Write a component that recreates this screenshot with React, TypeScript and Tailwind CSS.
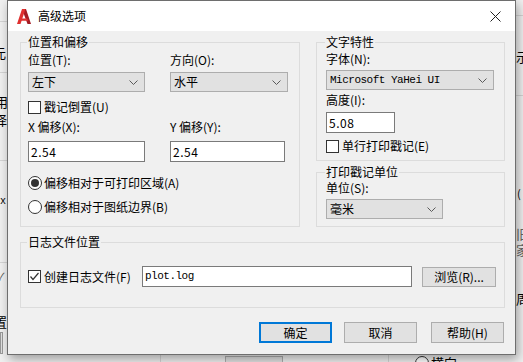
import React from "react";

const cjk = "font-['Noto_Sans_CJK_SC','Microsoft_YaHei',sans-serif]";

function Chevron() {
  return (
    <svg width="9" height="5" viewBox="0 0 9 5" className="shrink-0">
      <polyline points="0.5,0.5 4.5,4.5 8.5,0.5" fill="none" stroke="#5a5a5a" strokeWidth="1" />
    </svg>
  );
}

function Dropdown({ value, width, mono }: { value: string; width: string; mono?: boolean }) {
  return (
    <div
      className={`${width} h-[20px] flex items-center justify-between border border-[#adadad] bg-[#e1e1e1] pl-[3px] pr-[6px]`}
    >
      <span className={mono ? "font-['Liberation_Mono',monospace] text-[11px] tracking-[-0.5px]" : "text-[12px]"}>
        {value}
      </span>
      <Chevron />
    </div>
  );
}

function TextBox({ value, width, mono }: { value: string; width: string; mono?: boolean }) {
  return (
    <div className={`${width} h-[21px] flex items-center border border-[#7a7a7a] bg-white px-[2px]`}>
      <span className={mono ? "font-['Liberation_Mono',monospace] text-[11px] tracking-[-0.5px]" : "text-[12px] tracking-[0.5px]"}>
        {value}
      </span>
    </div>
  );
}

function CheckBox({ label, checked }: { label: string; checked?: boolean }) {
  return (
    <div className="flex items-center h-[16px]">
      <span className="w-[13px] h-[13px] border border-[#333] bg-white flex items-center justify-center">
        {checked && (
          <svg width="11" height="11" viewBox="0 0 11 11">
            <polyline points="1.5,5.5 4,8.5 9.5,2" fill="none" stroke="#333" strokeWidth="1.2" />
          </svg>
        )}
      </span>
      <span className="ml-[3px] text-[12px]">{label}</span>
    </div>
  );
}

function Radio({ label, selected }: { label: string; selected?: boolean }) {
  return (
    <div className="flex items-center h-[16px]">
      <span className="w-[14px] h-[14px] rounded-full border border-[#333] bg-white flex items-center justify-center">
        {selected && <span className="w-[8px] h-[8px] rounded-full bg-[#333]" />}
      </span>
      <span className="ml-[2px] text-[12px]">{label}</span>
    </div>
  );
}

function Group({
  title,
  className,
  children,
}: {
  title: string;
  className: string;
  children: React.ReactNode;
}) {
  return (
    <fieldset className={`border border-[#dcdcdc] ${className}`}>
      <legend className="text-[12px] leading-[16px] px-[1px] -ml-[1px]">{title}</legend>
      {children}
    </fieldset>
  );
}

function Button({ label, primary }: { label: string; primary?: boolean }) {
  return (
    <div
      className={`w-[73px] h-[21px] flex items-center justify-center bg-[#e1e1e1] text-[12px] ${
        primary ? "border-2 border-[#0078d7]" : "border border-[#adadad]"
      }`}
    >
      {label}
    </div>
  );
}

function AcadLogo() {
  return (
    <svg width="14" height="15" viewBox="0 0 14 15">
      <polygon points="5,0 9,0 14,15 10.5,15" fill="#a51c24" />
      <polygon points="5,0 8.5,0 3.5,15 0,15" fill="#e0302f" />
      <polygon points="3.6,9.5 10.3,9.5 11,11.8 2.9,11.8" fill="#e0302f" />
    </svg>
  );
}

export default function App() {
  return (
    <div className={`relative w-[523px] h-[362px] overflow-hidden bg-[#f0f0f0] text-[#000] ${cjk}`}>
      {/* background app peeking around the dialog */}
      <div className="absolute left-0 top-[21px] w-[7px] h-px bg-[#d4d4d4]" />
      <div className="absolute left-[-7px] top-[45px] text-[13px] leading-[15px]">元</div>
      <div className="absolute left-0 top-[72px] w-[7px] h-px bg-[#d4d4d4]" />
      <div className="absolute left-[-5px] top-[94px] text-[13px] leading-[15px]">用</div>
      <div className="absolute left-[-6px] top-[112px] text-[13px] leading-[15px]">择</div>
      <div className="absolute left-0 top-[160px] w-[7px] h-px bg-[#d4d4d4]" />
      <div className="absolute left-0 top-[196px] text-[10px] leading-[12px] font-['Liberation_Mono',monospace]">x</div>
      <div className="absolute left-0 top-[262px] w-[7px] h-px bg-[#d4d4d4]" />
      <div className="absolute left-[-3px] top-[270px] text-[11px] leading-[13px] text-[#555]">✓</div>
      <div className="absolute left-[-6px] top-[314px] text-[13px] leading-[15px]">置</div>
      <div className="absolute left-0 top-[332px] w-[3px] h-[22px] border border-[#999] bg-[#e1e1e1]" />
      <div className="absolute left-[516px] top-[15px] w-[7px] h-px bg-[#d4d4d4]" />
      <div className="absolute left-[516px] top-[49px] text-[13px] leading-[15px]">示</div>
      <div className="absolute left-[516px] top-[95px] w-[7px] h-px bg-[#d4d4d4]" />
      <div className="absolute left-[517px] top-[187px] text-[11px] leading-[13px]">(</div>
      <div className="absolute left-[516px] top-[226px] text-[13px] leading-[15px] text-[#666]">旧</div>
      <div className="absolute left-[516px] top-[242px] text-[13px] leading-[15px] text-[#666]">家</div>
      <div className="absolute left-[516px] top-[291px] text-[13px] leading-[15px]">周</div>
      <div className="absolute left-[225px] top-[356px] w-[58px] h-[8px] border border-[#adadad] bg-[#e1e1e1]" />
      <div className="absolute left-[160px] top-[354px] w-px h-[8px] bg-[#d4d4d4]" />
      <div className="absolute left-[388px] top-[354px] w-px h-[8px] bg-[#d4d4d4]" />
      <div className="absolute left-[415px] top-[356px] w-[14px] h-[14px] rounded-full border border-[#333] bg-white" />
      <div className="absolute left-[431px] top-[355px] text-[13px] leading-[15px]">横向</div>

      {/* dialog window */}
      <div className="absolute left-[7px] top-0 w-[509px] h-[355px] border border-[#6e6e6e] bg-[#f0f0f0] shadow-[2px_4px_10px_rgba(0,0,0,0.35)] flex flex-col">
        {/* title bar */}
        <div className="h-[30px] bg-white flex items-center pl-[9px] pr-[10px]">
          <AcadLogo />
          <span className="ml-[7px] text-[12px]">高级选项</span>
          <svg width="11" height="11" viewBox="0 0 11 11" className="ml-auto mr-[4px]">
            <line x1="0.5" y1="0.5" x2="10.5" y2="10.5" stroke="#222" strokeWidth="1" />
            <line x1="10.5" y1="0.5" x2="0.5" y2="10.5" stroke="#222" strokeWidth="1" />
          </svg>
        </div>

        {/* body */}
        <div className="flex-1 flex flex-col pl-[12px] pr-[10px] pt-[3px]">
          <div className="flex gap-[16px]">
            {/* 位置和偏移 */}
            <Group title="位置和偏移" className="w-[280px] h-[193px] pl-[7px]">
              <div className="flex gap-[25px]">
                <div className="flex flex-col w-[117px]">
                  <span className="mt-[2px] text-[12px] leading-[16px]">位置(T):</span>
                  <div className="mt-[4px]">
                    <Dropdown value="左下" width="w-[117px]" />
                  </div>
                </div>
                <div className="flex flex-col w-[117px]">
                  <span className="mt-[2px] text-[12px] leading-[16px]">方向(O):</span>
                  <div className="mt-[4px]">
                    <Dropdown value="水平" width="w-[118px]" />
                  </div>
                </div>
              </div>
              <div className="mt-[7px]">
                <CheckBox label="戳记倒置(U)" />
              </div>
              <div className="flex gap-[25px]">
                <div className="flex flex-col w-[117px]">
                  <span className="mt-[4px] text-[12px] leading-[16px]">X 偏移(X):</span>
                  <div className="mt-[6px]">
                    <TextBox value="2.54" width="w-[117px]" />
                  </div>
                </div>
                <div className="flex flex-col w-[117px]">
                  <span className="mt-[4px] text-[12px] leading-[16px]">Y 偏移(Y):</span>
                  <div className="mt-[6px]">
                    <TextBox value="2.54" width="w-[115px]" />
                  </div>
                </div>
              </div>
              <div className="mt-[13px]">
                <Radio label="偏移相对于可打印区域(A)" selected />
              </div>
              <div className="mt-[8px]">
                <Radio label="偏移相对于图纸边界(B)" />
              </div>
            </Group>

            {/* right column */}
            <div className="w-[189px] flex flex-col">
              <Group title="文字特性" className="h-[127px] pl-[9px]">
                <div className="flex flex-col">
                  <span className="mt-[1px] text-[12px] leading-[16px]">字体(N):</span>
                  <div className="mt-[3px]">
                    <Dropdown value="Microsoft YaHei UI" width="w-[168px]" mono />
                  </div>
                  <span className="mt-[2px] text-[12px] leading-[16px]">高度(I):</span>
                  <div className="mt-[4px]">
                    <TextBox value="5.08" width="w-[69px]" />
                  </div>
                  <div className="mt-[5px]">
                    <CheckBox label="单行打印戳记(E)" />
                  </div>
                </div>
              </Group>
              <Group title="打印戳记单位" className="mt-[3px] h-[63px] pl-[9px]">
                <div className="flex flex-col">
                  <span className="text-[12px] leading-[16px]">单位(S):</span>
                  <div className="mt-[3px]">
                    <Dropdown value="毫米" width="w-[117px]" />
                  </div>
                </div>
              </Group>
            </div>
          </div>

          {/* 日志文件位置 */}
          <Group title="日志文件位置" className="mt-[7px] h-[74px] pl-[7px] pr-[8px]">
            <div className="mt-[16px] flex items-center">
              <CheckBox label="创建日志文件(F)" checked />
              <div className="ml-auto flex items-center gap-[10px]">
                <TextBox value="plot.log" width="w-[270px]" mono />
                <div className="w-[74px] h-[20px] flex items-center justify-center border border-[#adadad] bg-[#e1e1e1] text-[12px]">
                  浏览(R)...
                </div>
              </div>
            </div>
          </Group>

          {/* buttons */}
          <div className="mt-[14px] flex justify-end gap-[12px] pr-[1px]">
            <Button label="确定" primary />
            <Button label="取消" />
            <div className="ml-[2px]">
              <Button label="帮助(H)" />
            </div>
          </div>
        </div>
      </div>
    </div>
  );
}
